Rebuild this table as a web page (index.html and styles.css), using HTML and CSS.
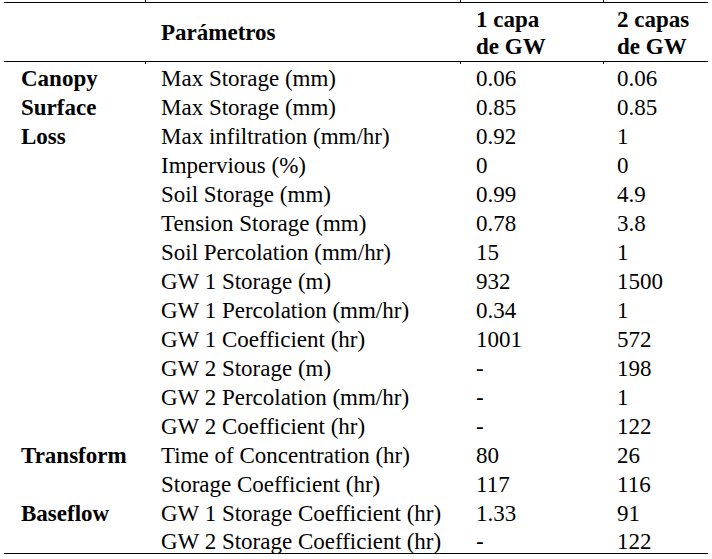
FILE: index.html
```html
<!DOCTYPE html>
<html>
<head>
<meta charset="utf-8">
<title>Parámetros</title>
<link rel="stylesheet" href="styles.css">
</head>
<body>
<div class="page">
<table class="params">
<colgroup>
<col class="c1"><col class="c2"><col class="c3"><col class="c4">
</colgroup>
<thead>
<tr>
<th class="grp"></th>
<th class="tk">Parámetros</th>
<th class="tk">1 capa<br>de GW</th>
<th class="tk">2 capas<br>de GW</th>
</tr>
</thead>
<tbody>
<tr class="first"><td class="grp">Canopy</td><td>Max Storage (mm)</td><td>0.06</td><td>0.06</td></tr>
<tr><td class="grp">Surface</td><td>Max Storage (mm)</td><td>0.85</td><td>0.85</td></tr>
<tr><td class="grp">Loss</td><td>Max infiltration (mm/hr)</td><td>0.92</td><td>1</td></tr>
<tr><td class="grp"></td><td>Impervious (%)</td><td>0</td><td>0</td></tr>
<tr><td class="grp"></td><td>Soil Storage (mm)</td><td>0.99</td><td>4.9</td></tr>
<tr><td class="grp"></td><td>Tension Storage (mm)</td><td>0.78</td><td>3.8</td></tr>
<tr><td class="grp"></td><td>Soil Percolation (mm/hr)</td><td>15</td><td>1</td></tr>
<tr><td class="grp"></td><td>GW 1 Storage (m)</td><td>932</td><td>1500</td></tr>
<tr><td class="grp"></td><td>GW 1 Percolation (mm/hr)</td><td>0.34</td><td>1</td></tr>
<tr><td class="grp"></td><td>GW 1 Coefficient (hr)</td><td>1001</td><td>572</td></tr>
<tr><td class="grp"></td><td>GW 2 Storage (m)</td><td>-</td><td>198</td></tr>
<tr><td class="grp"></td><td>GW 2 Percolation (mm/hr)</td><td>-</td><td>1</td></tr>
<tr><td class="grp"></td><td>GW 2 Coefficient (hr)</td><td>-</td><td>122</td></tr>
<tr><td class="grp">Transform</td><td>Time of Concentration (hr)</td><td>80</td><td>26</td></tr>
<tr><td class="grp"></td><td>Storage Coefficient (hr)</td><td>117</td><td>116</td></tr>
<tr><td class="grp">Baseflow</td><td>GW 1 Storage Coefficient (hr)</td><td>1.33</td><td>91</td></tr>
<tr class="last"><td class="grp"></td><td class="tk">GW 2 Storage Coefficient (hr)</td><td class="tk">-</td><td class="tk">122</td></tr>
</tbody>
</table>
</div>
</body>
</html>
```

FILE: styles.css
```css
html, body {
  margin: 0;
  padding: 0;
  background: #fff;
}

.page {
  padding: 2px 0 0 4px;
}

.params {
  width: 704px;
  table-layout: fixed;
  border-collapse: separate;
  border-spacing: 0;
  font-family: "Liberation Serif", serif;
  font-size: 23px;
  color: #000;
}

.params th,
.params td {
  font-family: "Liberation Serif", serif;
  text-align: left;
  white-space: nowrap;
  padding: 0 0 0 16px;
}

.c1 { width: 141px; }
.c2 { width: 315px; }
.c3 { width: 143px; }
.c4 { width: 105px; }

.params th:nth-child(4),
.params td:nth-child(4) {
  padding-left: 14px;
}

.params .grp {
  padding-left: 17px;
  font-weight: bold;
}

.params th {
  font-weight: bold;
  vertical-align: middle;
  line-height: 26.6px;
  height: 53px;
  padding-top: 4px;
  padding-bottom: 1px;
  border-top: 1px solid #000;
  border-bottom: 1px solid #000;
}

.params td {
  line-height: 29px;
  height: 29px;
  vertical-align: top;
}

.params tr.first td {
  padding-top: 2px;
}

.params tr.last td {
  line-height: 22px;
  height: 22px;
  padding-top: 3px;
  border-bottom: 1px solid #000;
}

/* column-boundary ticks on the rules */
.tk {
  position: relative;
}

th.tk::before,
th.tk::after,
tr.last td.tk::after {
  content: "";
  position: absolute;
  left: 0;
  width: 1px;
  height: 2px;
  background: #000;
}

th.tk::before {
  top: -3px;
}

th.tk::after,
tr.last td.tk::after {
  bottom: -3px;
}
```
